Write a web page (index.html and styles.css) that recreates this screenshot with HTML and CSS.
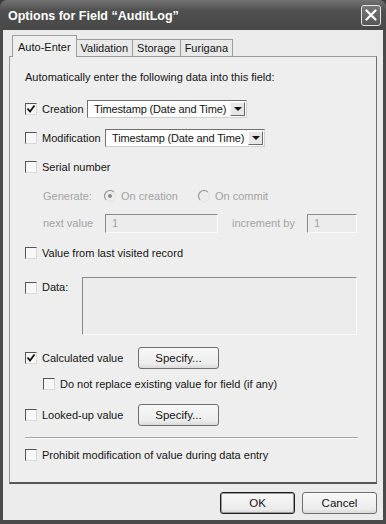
FILE: index.html
```html
<!doctype html>
<html lang="en">
<head>
	<meta charset="utf-8">
	<title>Options for Field “AuditLog”</title>
	<link rel="stylesheet" href="styles.css">
</head>
<body>
<div class="window">
	<div class="titlebar">
		<span class="title">Options for Field “AuditLog”</span>
		<span class="close">
			<svg width="12" height="12" viewBox="0 0 12 12"><path d="M1.5 1.5 L10.5 10.5 M10.5 1.5 L1.5 10.5" stroke="#fff" stroke-width="2.2" stroke-linecap="round"/></svg>
		</span>
	</div>

	<div class="client">
		<div class="tabs">
			<span class="tab active">Auto-Enter</span>
			<span class="tab">Validation</span>
			<span class="tab">Storage</span>
			<span class="tab">Furigana</span>
		</div>

		<div class="panel">
			<p class="intro">Automatically enter the following data into this field:</p>

			<div class="row creation">
				<span class="check on"><svg width="10" height="10" viewBox="0 0 10 10"><path d="M1.5 4.5 L4 7.5 L8.5 1.5" fill="none" stroke="#111" stroke-width="1.8"/></svg></span>
				<span class="lbl w-creation">Creation</span>
				<span class="select">Timestamp (Date and Time)<span class="drop"></span></span>
			</div>

			<div class="row modification">
				<span class="check"></span>
				<span class="lbl w-modification">Modification</span>
				<span class="select">Timestamp (Date and Time)<span class="drop"></span></span>
			</div>

			<div class="row serial">
				<span class="check"></span>
				<span class="lbl">Serial number</span>
			</div>

			<div class="row generate disabled">
				<span class="lbl w-generate">Generate:</span>
				<span class="radio on"></span>
				<span class="lbl w-oncreation">On creation</span>
				<span class="radio"></span>
				<span class="lbl">On commit</span>
			</div>

			<div class="row nextvalue disabled">
				<span class="lbl w-next">next value</span>
				<span class="field w-field1">1</span>
				<span class="lbl w-incr">increment by</span>
				<span class="field w-field2">1</span>
			</div>

			<div class="row lastvisited">
				<span class="check"></span>
				<span class="lbl">Value from last visited record</span>
			</div>

			<div class="row data">
				<span class="check"></span>
				<span class="lbl w-data">Data:</span>
				<span class="textarea"></span>
			</div>

			<div class="row calculated">
				<span class="check on"><svg width="10" height="10" viewBox="0 0 10 10"><path d="M1.5 4.5 L4 7.5 L8.5 1.5" fill="none" stroke="#111" stroke-width="1.8"/></svg></span>
				<span class="lbl w-specify">Calculated value</span>
				<span class="btn specify">Specify...</span>
			</div>

			<div class="row noreplace">
				<span class="check"></span>
				<span class="lbl">Do not replace existing value for field (if any)</span>
			</div>

			<div class="row lookedup">
				<span class="check"></span>
				<span class="lbl w-specify">Looked-up value</span>
				<span class="btn specify">Specify...</span>
			</div>

			<div class="sep"></div>

			<div class="row prohibit">
				<span class="check"></span>
				<span class="lbl">Prohibit modification of value during data entry</span>
			</div>
		</div>

		<div class="actions">
			<span class="btn default">OK</span>
			<span class="btn">Cancel</span>
		</div>
	</div>
</div>
</body>
</html>
```

FILE: styles.css
```css
body {
	margin: 0;
	background: #3c3c3c;
	font-family: "Liberation Sans", Arial, sans-serif;
	font-size: 11px;
	color: #141414;
}

/* window frame */
.window {
	width: 386px;
	height: 524px;
	box-sizing: border-box;
	background: #4a4a4a;
	border-radius: 7px 7px 0 0;
	display: flex;
	flex-direction: column;
	overflow: hidden;
}
.titlebar {
	height: 30px;
	flex: none;
	display: flex;
	align-items: center;
	padding: 0 5px 0 8px;
	background: linear-gradient(#737373, #505050 35%, #484848);
}
.title {
	flex: 1;
	color: #fff;
	font-weight: bold;
	font-size: 12.5px;
	padding-top: 2px;
}
.close {
	width: 18px;
	height: 19px;
	border: 1px solid #e6e6e6;
	border-radius: 3px;
	background: linear-gradient(#777, #575757);
	display: flex;
	align-items: center;
	justify-content: center;
}

.client {
	flex: 1;
	margin: 0 3px 4px;
	background: #ebebeb;
	padding: 5px 6px 0;
	display: flex;
	flex-direction: column;
}

/* tabs */
.tabs {
	height: 21px;
	display: flex;
	align-items: flex-end;
	padding-left: 3px;
}
.tab {
	height: 17px;
	box-sizing: border-box;
	padding: 0 4px;
	line-height: 16px;
	border: 1px solid #9c9c9c;
	border-bottom: none;
	border-left: none;
	background: #e9e9e9;
}
.tab.active {
	position: relative;
	height: 22px;
	margin-bottom: -1px;
	padding: 3px 5px 0;
	border-left: 1px solid #9c9c9c;
	background: #eeeeee;
}

.panel {
	height: 428px;
	box-sizing: border-box;
	border: 1px solid #9a9a9a;
	border-right-color: #6e6e6e;
	border-bottom: 2px solid #555;
	background: #eeeeee;
	padding: 9px 0 0 15px;
}
.intro {
	margin: 0;
	height: 22px;
	line-height: 22px;
}

/* rows */
.row {
	display: flex;
	align-items: center;
	height: 22px;
	margin-top: 7px;
}
.creation { margin-top: 10px; }
.nextvalue { margin-top: 5px; }
.lastvisited { margin-top: 8px; }
.data {
	height: 58px;
	margin-top: 13px;
	align-items: flex-start;
}
.data .check { margin-top: 5px; }
.data .lbl { margin-top: 4px; }
.calculated { margin-top: 12px; }
.noreplace {
	margin-top: 4px;
	padding-left: 18px;
}
.lookedup { margin-top: 9px; }
.generate, .nextvalue { padding-left: 18px; }

.disabled { color: #a3a3a3; }

.check {
	width: 12px;
	height: 12px;
	box-sizing: border-box;
	border: 1px solid;
	border-color: #555 #d8d8d8 #d8d8d8 #555;
	background: #f7f7f7;
	margin-right: 5px;
	display: flex;
	align-items: center;
	justify-content: center;
	flex: none;
}
.radio {
	width: 12px;
	height: 12px;
	box-sizing: border-box;
	border-radius: 50%;
	border: 1.5px solid;
	border-color: #8a8a8a #e4e4e4 #e4e4e4 #8a8a8a;
	background: #ececec;
	margin-right: 5px;
	display: flex;
	align-items: center;
	justify-content: center;
	flex: none;
}
.radio.on::after {
	content: "";
	width: 4px;
	height: 4px;
	border-radius: 50%;
	background: #8c8c8c;
}

.lbl { white-space: nowrap; }
.w-creation { width: 45px; }
.w-modification { width: 63px; }
.w-generate { width: 61px; }
.w-oncreation { width: 77px; }
.w-next { width: 62px; }
.w-incr { width: 75px; margin-left: 14px; }
.w-data { width: 40px; }
.w-specify { width: 96px; }

.select {
	width: 160px;
	height: 18px;
	box-sizing: border-box;
	border: 1px solid;
	border-color: #707070 #cfcfcf #cfcfcf #707070;
	background: #fff;
	padding-left: 6px;
	display: flex;
	align-items: center;
	justify-content: space-between;
	white-space: nowrap;
	letter-spacing: -0.15px;
}
.drop {
	width: 15px;
	height: 14px;
	margin-right: 1px;
	box-sizing: border-box;
	border: 1px solid;
	border-color: #f8f8f8 #6a6a6a #6a6a6a #f8f8f8;
	background: #e6e6e6;
	display: flex;
	align-items: center;
	justify-content: center;
}
.drop::after {
	content: "";
	border-left: 4px solid transparent;
	border-right: 4px solid transparent;
	border-top: 4px solid #111;
}

.field {
	height: 19px;
	box-sizing: border-box;
	border: 1px solid;
	border-color: #8a8a8a #fafafa #fafafa #8a8a8a;
	background: #ececec;
	padding-left: 6px;
	line-height: 17px;
}
.w-field1 { width: 113px; }
.w-field2 { width: 50px; }

.textarea {
	width: 275px;
	height: 58px;
	box-sizing: border-box;
	border: 1px solid;
	border-color: #8a8a8a #fafafa #fafafa #8a8a8a;
	background: #ececec;
}

.sep {
	width: 333px;
	height: 1px;
	margin-top: 11px;
	background: #a6a6a6;
	border-bottom: 1px solid #fbfbfb;
}
.prohibit { margin-top: 5px; }

/* buttons */
.btn {
	width: 75px;
	height: 22px;
	box-sizing: border-box;
	border: 1px solid #6f6f6f;
	border-radius: 3px;
	background: linear-gradient(#f8f8f8, #ececec 80%, #d9d9d9);
	display: flex;
	align-items: center;
	justify-content: center;
	font-size: 11.5px;
}
.specify { width: 81px; }
.btn.default {
	border-color: #1e1e1e;
	box-shadow: inset 0 0 0 1px #9a9a9a;
}

.actions {
	display: flex;
	justify-content: flex-end;
	gap: 7px;
	margin-top: 8px;
}
```
